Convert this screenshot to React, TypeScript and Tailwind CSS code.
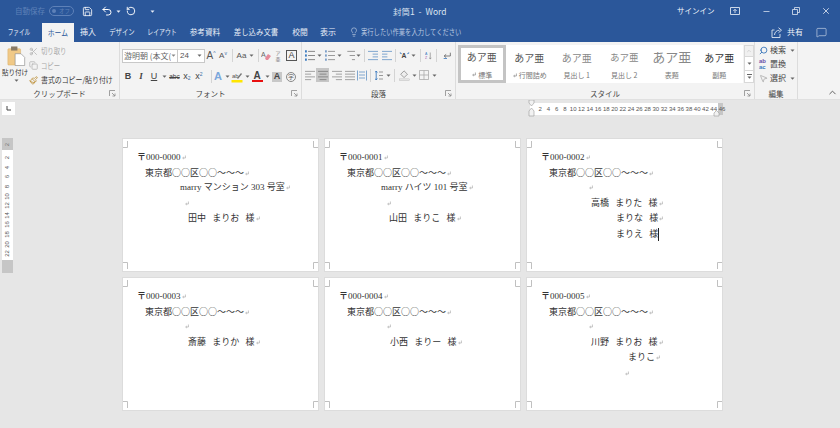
import React from "react";
import { Save, Undo2, RotateCcw, Scissors, Copy, Paintbrush, Lightbulb, MessageSquare, ChevronUp, Search, MousePointer2, X, Minus } from "lucide-react";

const JP = { fontFamily: '"Noto Sans CJK JP", "Noto Sans", sans-serif' };
const MIN = { fontFamily: '"Liberation Serif", "Noto Sans CJK JP", serif' };

const Caret = ({ c = "#666" }: { c?: string }) => (
  <svg width="5" height="3" viewBox="0 0 5 3" className="shrink-0"><path d="M0.5 0.5h4L2.5 2.8z" fill={c} /></svg>
);
const Drop = ({ w = 9 }: { w?: number }) => (
  <span className="flex items-center justify-center shrink-0" style={{ width: w }}><Caret /></span>
);
const Cell = ({ w, children, cls = "" }: { w: number; children?: React.ReactNode; cls?: string }) => (
  <span className={`flex items-center justify-center shrink-0 h-full ${cls}`} style={{ width: w }}>{children}</span>
);
const Sp = ({ w }: { w: number }) => <span className="shrink-0" style={{ width: w }} />;
const SepC = ({ w }: { w: number }) => (
  <span className="flex justify-end items-center shrink-0 pr-px" style={{ width: w }}><span className="w-px h-[13px] bg-[#d4d4d4]" /></span>
);
const Launcher = () => (
  <svg width="7" height="7" viewBox="0 0 7 7" className="shrink-0"><path d="M0.5 6V0.5H6M3 3l3 3M6 3.5V6H3.5" fill="none" stroke="#8a8a8a" strokeWidth="0.8" /></svg>
);
const Mark = ({ c = "#a0a0a0" }: { c?: string }) => (
  <svg width="4" height="5" viewBox="0 0 4 5" className="inline-block align-baseline ml-px"><path d="M3.4 0.5V3H0.8M1.8 2L0.7 3l1.1 1" fill="none" stroke={c} strokeWidth="0.6" /></svg>
);

const Lines = ({ rows, c = "#a2a2a2", bullet, w = 10 }: { rows: [number, number][]; c?: string; bullet?: string; w?: number }) => (
  <svg width={w} height="11" viewBox="0 0 13 12" preserveAspectRatio="none">
    {rows.map(([a, b], i) => {
      const y = 1.5 + (i * 9) / Math.max(rows.length - 1, 1);
      return <path key={i} d={`M${a} ${y}H${b}`} stroke={c} strokeWidth="1.1" />;
    })}
    {bullet && rows.map((_, i) => {
      const y = 1.5 + (i * 9) / Math.max(rows.length - 1, 1);
      return <rect key={i} x="0" y={y - 1.2} width="2.4" height="2.4" fill={bullet} />;
    })}
  </svg>
);

const tabs: [string, number, number][] = [
  ["ファイル", 8, 22], ["挿入", 80, 16], ["デザイン", 109, 25], ["レイアウト", 147, 29], ["参考資料", 190, 30],
  ["差し込み文書", 234, 44], ["校閲", 292, 15], ["表示", 320, 16],
];

const TabLabel = ({ w, children }: { w: number; children: React.ReactNode }) => (
  <span className="flex justify-center shrink-0 text-[8px] text-[#e8eef7] whitespace-nowrap" style={{ width: w }}>
    <span className="inline-block origin-center" style={{ transform: `scaleX(${Math.min(1, (w + 0.5) / (String(children).length * 8))})` }}>{children}</span>
  </span>
);

function TitleBar() {
  return (
    <div className="h-[22px] flex items-center bg-[#2b579a] text-[#dfe6f2]" style={JP}>
      <span className="ml-[15px] w-[30px] text-[7.5px] text-[#5e81b8] whitespace-nowrap">自動保存</span>
      <span className="ml-[4px] w-[25px] h-[10px] rounded-full border border-[#5e81b8] flex items-center gap-[3px] pl-[2px] text-[5.5px] text-[#5e81b8]">
        <span className="w-[4px] h-[4px] rounded-full bg-[#5e81b8]" />オフ
      </span>
      <Save size={11} strokeWidth={1.8} color="#fff" className="ml-[8px]" />
      <Undo2 size={12} strokeWidth={2} color="#fff" className="ml-[8px]" />
      <span className="ml-[3px]"><Caret c="#e8eef7" /></span>
      <RotateCcw size={10} strokeWidth={2.2} color="#fff" className="ml-[5px]" />
      <span className="ml-[14px]"><Caret c="#e8eef7" /></span>
      <span className="ml-[238px] w-[56px] text-[8.5px] text-[#dbe3f0] whitespace-nowrap [word-spacing:2px]">封筒1 - Word</span>
      <span className="ml-[228px] w-[32px] text-[7.5px] text-[#f2f5fa] whitespace-nowrap">サインイン</span>
      <svg width="10" height="8" viewBox="0 0 10 8" className="ml-[21px]"><path d="M.5.5h9v7h-9zM5 6V2.5M3.3 4L5 2.3 6.7 4" fill="none" stroke="#dfe6f2" strokeWidth="0.9" /></svg>
      <Minus size={9} color="#dfe6f2" className="ml-[22px]" />
      <svg width="8" height="8" viewBox="0 0 8 8" className="ml-[21px]"><path d="M.5 2.5h5v5h-5zM2.5 2.5v-2h5v5h-2" fill="none" stroke="#dfe6f2" strokeWidth="0.8" /></svg>
      <X size={10} color="#dfe6f2" className="ml-[21px]" />
    </div>
  );
}

function TabBar() {
  let x = 0;
  return (
    <div className="h-[20px] flex items-stretch bg-[#2b579a]" style={JP}>
      {tabs.slice(0, 1).map(([t, l, w]) => {
        const el = <span key={t} className="flex items-center" style={{ marginLeft: l - x }}><TabLabel w={w}>{t}</TabLabel></span>;
        x = l + w;
        return el;
      })}
      <span className="ml-[12px] w-[32px] mt-[1px] bg-[#f3f3f3] text-[#2b579a] text-[8px] flex items-center justify-center whitespace-nowrap"><span className="inline-block scale-x-[0.85]">ホーム</span></span>
      {(() => { x = 74; return null; })()}
      {tabs.slice(1).map(([t, l, w]) => {
        const el = <span key={t} className="flex items-center" style={{ marginLeft: l - x }}><TabLabel w={w}>{t}</TabLabel></span>;
        x = l + w;
        return el;
      })}
      <span className="flex items-center ml-[13px] text-[7.5px] text-[#b9c8e0] whitespace-nowrap">
        <Lightbulb size={10} strokeWidth={1.3} color="#dfe6f2" />
        <span className="ml-[2px] w-[106px]"><span className="inline-block origin-left scale-x-[0.84]">実行したい作業を入力してください</span></span>
      </span>
      <span className="flex items-center ml-[304px] text-[8px] text-[#eef2f8] whitespace-nowrap">
        <svg width="12" height="11" viewBox="0 0 12 11"><path d="M3.5 3H1v7.5h8V7M3.5 8C3.5 5 6 3.2 8.5 3.2M7.5.7l3 2.5-3 2.5" fill="none" stroke="#dfe6f2" strokeWidth="0.9" /></svg>
        <span className="ml-[4px]">共有</span>
        <MessageSquare size={11} strokeWidth={1.3} color="#dfe6f2" className="ml-[13px]" />
      </span>
    </div>
  );
}

const Group = ({ w, label, children, launcher = true, sepl = true }: { w: number; label: string; children: React.ReactNode; launcher?: boolean; sepl?: boolean }) => (
  <div className={`flex flex-col shrink-0 h-full ${sepl ? "border-r border-[#dcdcdc]" : ""}`} style={{ width: w }}>
    <div className="flex-1 min-h-0">{children}</div>
    <div className="h-[11px] flex items-center relative justify-center text-[7.5px] text-[#444] whitespace-nowrap">
      {label}
      {launcher && <span className="absolute right-[3px] top-[2px]"><Launcher /></span>}
    </div>
  </div>
);

function Clipboard() {
  return (
    <Group w={120} label="クリップボード">
      <div className="flex h-full">
        <div className="w-[33px] flex flex-col items-center pt-[4px]">
          <svg width="19" height="20" viewBox="0 0 20 22" className="ml-[3px]"><rect x="0.5" y="3" width="14" height="18" rx="1" fill="#f0c987" stroke="#d8a85e" strokeWidth="0.5" /><rect x="4" y="0.5" width="7" height="4.5" fill="#8a7b66" /><path d="M8.5 8.5h6.5l4 4v9H8.5z" fill="#fff" stroke="#8c8c8c" strokeWidth="0.7" /></svg>
          <span className="text-[7px] leading-[9px] text-[#333] whitespace-nowrap mt-[2px] scale-x-[0.93]">貼り付け</span>
          <span className="mt-[2px] ml-[3px]"><Caret /></span>
        </div>
        <div className="pt-[2px] flex flex-col text-[7.5px] whitespace-nowrap">
          <span className="h-[14px] flex items-center text-[#a8a8a8]"><Scissors size={9} color="#b0b0b0" className="mr-[3px]" /><span className="inline-block origin-left scale-x-[0.85]">切り取り</span></span>
          <span className="h-[15px] flex items-center text-[#a8a8a8]"><Copy size={9} color="#b0b0b0" className="mr-[3px]" /><span className="inline-block origin-left scale-x-[0.85]">コピー</span></span>
          <span className="h-[14px] flex items-center text-[#333]"><Paintbrush size={9} color="#b98a2e" className="mr-[3px]" /><span className="inline-block origin-left scale-x-[0.92]">書式のコピー/貼り付け</span></span>
        </div>
      </div>
    </Group>
  );
}

function FontGroup() {
  return (
    <Group w={182} label="フォント">
      <div className="flex flex-col pt-[6px] pl-[2px] text-[#444]">
        <div className="flex items-center h-[15px]">
          <span className="w-[56px] h-[14px] bg-white border border-[#c8c8c8] text-[8px] text-[#666] pl-[1px] pr-[1px] flex items-center justify-between whitespace-nowrap overflow-hidden">
            <span className="w-[49px] overflow-hidden">游明朝 (本文(</span><Caret c="#888" />
          </span>
          <span className="w-[27px] h-[14px] bg-white border border-[#c8c8c8] border-l-0 text-[8px] text-[#555] pl-[2px] flex items-center justify-between pr-[2px]" style={{ fontFamily: '"Liberation Sans"' }}>24<Caret /></span>
          <Cell w={12} cls="text-[10px] font-['Liberation_Sans'] text-[#555]">A<sup className="text-[#3a6ea5] text-[5px]">^</sup></Cell>
          <Cell w={12} cls="text-[8px] font-['Liberation_Sans'] text-[#555]">A<sup className="text-[#3a6ea5] text-[5px]">v</sup></Cell>
          <SepC w={5} />
          <Cell w={15} cls="text-[8px] font-['Liberation_Sans'] text-[#555]">Aa</Cell>
          <Cell w={5}><Caret /></Cell>
          <SepC w={6} />
          <Cell w={12}>
            <svg width="11" height="11" viewBox="0 0 11 11"><text x="0" y="7" fontSize="7" fill="#666" fontFamily="Liberation Sans">A</text><path d="M4 8l3-4 3 2-3 4H5z" fill="#e58a9a" /></svg>
          </Cell>
          <Cell w={12}><span className="flex flex-col items-center text-[5px] leading-[5.5px] text-[#777]"><span>ア</span><span>亜</span></span></Cell>
          <Sp w={2} />
          <span className="w-[11px] h-[11px] border border-[#555] flex items-center justify-center text-[9px] font-['Liberation_Sans'] text-[#444]">A</span>
        </div>
        <div className="flex items-center h-[15px] mt-[6px] font-['Liberation_Sans'] text-[#444]">
          <Cell w={12} cls="font-bold text-[9px]">B</Cell>
          <Cell w={14} cls="italic text-[9px] font-['Liberation_Serif'] font-bold">I</Cell>
          <Cell w={12} cls="underline text-[9px]">U</Cell>
          <Drop w={8} />
          <Cell w={13} cls="text-[6.5px] line-through">abc</Cell>
          <Cell w={12} cls="text-[9px]">x<sub className="text-[5px] text-[#3a6ea5]">2</sub></Cell>
          <Cell w={12} cls="text-[9px]">x<sup className="text-[5px] text-[#3a6ea5]">2</sup></Cell>
          <SepC w={8} />
          <Cell w={10} cls="text-[11px] text-[#7ba7dc] font-bold">A</Cell>
          <Drop w={8} />
          <Cell w={12}><svg width="12" height="12" viewBox="0 0 12 12"><text x="1" y="7" fontSize="6" fill="#555" fontFamily="Liberation Sans">ab</text><path d="M6 7l4-5 1 1-4 5z" fill="#777" /><rect x="0.5" y="9" width="11" height="2.5" fill="#ffe600" /></svg></Cell>
          <Drop w={8} />
          <Cell w={12}><span className="flex flex-col items-center leading-[9px] text-[10px] font-bold text-[#444]">A<span className="w-[11px] h-[2.5px] bg-[#e81010]" /></span></Cell>
          <Drop w={8} />
          <Cell w={12}><span className="w-[10px] h-[10px] bg-[#c8c8c8] flex items-center justify-center text-[9px] font-bold text-[#444]">A</span></Cell>
          <Sp w={2} />
          <Cell w={12}><span className="w-[10px] h-[10px] rounded-full border border-[#888] flex items-center justify-center text-[6px] text-[#666]" style={JP}>字</span></Cell>
        </div>
      </div>
    </Group>
  );
}

const B = "#3d7cc0";
function ParaGroup() {
  return (
    <Group w={154} label="段落">
      <div className="flex flex-col pt-[6px] pl-[3px]">
        <div className="flex items-center h-[15px]">
          <Cell w={10}><Lines rows={[[4, 13], [4, 13], [4, 13]]} bullet={B} c="#888" /></Cell><Drop w={8} />
          <Sp w={2} />
          <Cell w={10}><Lines rows={[[4, 13], [4, 13], [4, 13]]} bullet="#7d9fc8" c="#999" /></Cell><Drop w={8} />
          <Sp w={2} />
          <Cell w={10}><Lines rows={[[3, 13], [6, 13], [9, 13]]} c="#999" /></Cell><Drop w={6} />
          <SepC w={5} />
          <Sp w={2} />
          <Cell w={10}><Lines rows={[[0, 13], [6, 13], [6, 13], [0, 13]]} c="#7fa6cf" /></Cell>
          <Sp w={4} />
          <Cell w={10}><Lines rows={[[0, 13], [0, 7], [0, 7], [0, 13]]} c="#7fa6cf" /></Cell>
          <SepC w={5} />
          <Sp w={2} />
          <Cell w={11}><svg width="12" height="11" viewBox="0 0 13 11"><text x="3" y="9" fontSize="8" fontWeight="700" fill="#444" fontFamily="Liberation Sans">A</text><path d="M1 2l2 1.5M12 2l-2 1.5" stroke="#3d7cc0" strokeWidth="1.2" /></svg></Cell><Drop w={7} />
          <SepC w={5} />
          <Sp w={3} />
          <Cell w={7}><svg width="10" height="14" viewBox="0 0 12 14"><text x="0" y="6" fontSize="6" fill="#3d7cc0" fontFamily="Liberation Sans">A</text><text x="0" y="13" fontSize="6" fill="#9c4fa8" fontFamily="Liberation Sans">Z</text><path d="M9 1v11M7 10l2 2 2-2" fill="none" stroke="#666" strokeWidth="0.9" /></svg></Cell>
          <SepC w={6} />
          <Sp w={4} />
          <Cell w={10}><svg width="11" height="10" viewBox="0 0 12 10"><path d="M10 1v4H3M5 3L2.5 5 5 7" fill="none" stroke="#666" strokeWidth="1" /><path d="M2 8h4" stroke="#3d7cc0" /></svg></Cell>
        </div>
        <div className="flex items-center h-[14px] mt-[5px]">
          <Cell w={10}><Lines rows={[[0, 13], [0, 8], [0, 13], [0, 8]]} /></Cell>
          <Sp w={1} />
          <Cell w={13} cls="bg-[#c6c6c6]"><Lines rows={[[0, 13], [2, 11], [0, 13], [2, 11]]} c="#8a8a8a" /></Cell>
          <Sp w={3} />
          <Cell w={10}><Lines rows={[[0, 13], [5, 13], [0, 13], [5, 13]]} /></Cell>
          <Sp w={3} />
          <Cell w={10}><Lines rows={[[0, 13], [0, 13], [0, 13], [0, 13]]} /></Cell>
          <Sp w={2} />
          <Cell w={10}><svg width="10" height="11" viewBox="0 0 10 11"><path d="M.5.5v10M9.5.5v10M2 2h6M2 5h6M2 8h6" fill="none" stroke="#7fa6cf" strokeWidth="1" /></svg></Cell>
          <SepC w={5} />
          <Sp w={3} />
          <Cell w={8}><svg width="8" height="11" viewBox="0 0 8 11"><path d="M1.2 1v9M0 2.5L1.2 1l1.2 1.5M0 8.5L1.2 10l1.2-1.5" fill="none" stroke="#3d7cc0" strokeWidth="0.9" /><path d="M4 2h4M4 5.5h4M4 9h4" stroke="#999" /></svg></Cell><Drop w={10} />
          <SepC w={3} />
          <Sp w={3} />
          <Cell w={11}><svg width="12" height="13" viewBox="0 0 13 13"><path d="M6 1l4 4-4 4-4-4z" fill="#eee" stroke="#777" strokeWidth="0.8" /><rect x="0.5" y="10.5" width="12" height="2" fill="#e6e6e6" stroke="#aaa" strokeWidth="0.4" /></svg></Cell><Drop w={8} />
          <Sp w={1} />
          <Cell w={10}><svg width="10" height="10" viewBox="0 0 11 11"><path d="M.5.5h10v10H.5zM5.5.5v10M.5 5.5h10" fill="none" stroke="#aaa" strokeWidth="0.9" /></svg></Cell><Drop w={10} />
        </div>
      </div>
    </Group>
  );
}

const styles: { big: string; small: string; cls: string; mark?: boolean; on?: boolean }[] = [
  { big: "あア亜", small: "標準", cls: "text-[10px] text-[#555]", mark: true, on: true },
  { big: "あア亜", small: "行間詰め", cls: "text-[10px] text-[#555]", mark: true },
  { big: "あア亜", small: "見出し 1", cls: "text-[10px] text-[#888]" },
  { big: "あア亜", small: "見出し 2", cls: "text-[9.5px] text-[#888]" },
  { big: "あア亜", small: "表題", cls: "text-[13px] text-[#888]" },
  { big: "あア亜", small: "副題", cls: "text-[10px] text-[#333]" },
];

function StyleGroup() {
  return (
    <Group w={299} label="スタイル">
      <div className="flex pt-[3px] pl-[2px] h-[41px]">
        <div className="flex w-[285px] h-[38px] bg-white">
          {styles.map((s) => (
            <div key={s.small} className={`w-[47.5px] shrink-0 flex flex-col items-center ${s.on ? "border-[3px] border-[#c4c4c4]" : "pt-[3px]"}`} style={MIN}>
              <span className={`h-[20px] flex items-center whitespace-nowrap ${s.cls}`}>{s.big}</span>
              <span className="mt-[2px] text-[7px] text-[#777] whitespace-nowrap flex items-center" style={JP}>{s.mark && <span className="mr-[2px] flex"><Mark c="#777" /></span>}{s.small}</span>
            </div>
          ))}
        </div>
        <div className="w-[10px] h-[38px] flex flex-col ml-px">
          <span className="h-[12px] bg-[#f0f0f0] border border-[#d8d8d8] flex items-center justify-center"><ChevronUp size={6} color="#bbb" /></span>
          <span className="h-[13px] bg-white border-x border-[#d8d8d8] flex items-center justify-center"><Caret /></span>
          <span className="h-[13px] bg-white border border-[#d8d8d8] flex flex-col items-center justify-center gap-px"><span className="w-[5px] h-px bg-[#666]" /><Caret /></span>
        </div>
      </div>
    </Group>
  );
}

function EditGroup() {
  return (
    <Group w={43} label="編集" launcher={false}>
      <div className="flex flex-col pt-[1px] pl-[4px] text-[8px] text-[#444] whitespace-nowrap">
        <span className="h-[14px] flex items-center"><Search size={9} color="#2b6cb5" strokeWidth={2.2} className="mr-[2px] -scale-x-100" />検索<span className="ml-[4px]"><Caret /></span></span>
        <span className="h-[14px] flex items-center"><span className="w-[10px] mr-[1px] leading-[6px] text-[6px] font-bold text-[#6a4fa8]" style={{ fontFamily: "Liberation Sans" }}>ab<br /><span className="text-[#3d7cc0]">ac</span></span>置換</span>
        <span className="h-[14px] flex items-center"><MousePointer2 size={9} color="#777" strokeWidth={1.2} className="mr-[2px]" />選択<span className="ml-[4px]"><Caret /></span></span>
      </div>
    </Group>
  );
}

function Ribbon() {
  return (
    <div className="h-[58px] flex bg-[#f3f3f3] border-b border-[#e0e0e0] text-[#444]" style={JP}>
      <Clipboard />
      <FontGroup />
      <ParaGroup />
      <StyleGroup />
      <EditGroup />
      <div className="flex-1 flex items-end justify-end pb-[1px] pr-[2px]"><ChevronUp size={11} color="#555" /></div>
    </div>
  );
}

const nums = Array.from({ length: 23 }, (_, i) => (i + 1) * 2);

function HRuler() {
  return (
    <div className="h-[16px] flex items-start pt-[2px] pl-[2px]">
      <span className="w-[13px] h-[13px] bg-white flex items-center justify-center">
        <svg width="5" height="5" viewBox="0 0 5 5"><path d="M1 0v4h4" fill="none" stroke="#444" strokeWidth="1" /></svg>
      </span>
      <div className="ml-[515px] w-[190px] h-[12px] mt-px bg-white flex items-center pl-[6px] relative font-['Liberation_Sans'] text-[6px] text-[#555]">
        <span className="absolute left-[-2px] top-[-3px]"><svg width="7" height="17" viewBox="0 0 7 17"><path d="M1 0h5v3L3.5 6 1 3zM1 11l2.5-3L6 11v5H1z" fill="#f2f2f2" stroke="#999" strokeWidth="0.6" /></svg></span>
        <span className="absolute right-[-3px] top-0 w-[5px] h-[12px] bg-[#c6c6c6]" />
        {nums.map((n) => <span key={n} className="relative w-[8.27px] shrink-0 text-center">{n}</span>)}
        <span className="absolute right-[0px] top-[7px]"><svg width="7" height="7" viewBox="0 0 7 7"><path d="M1 6V3l2.5-2.5L6 3v3z" fill="#f2f2f2" stroke="#999" strokeWidth="0.6" /></svg></span>
      </div>
    </div>
  );
}

type L = { x: number; t?: string; mark?: boolean; cursor?: boolean; wide?: boolean };
type C = { code: string; extra?: L[] };
const addr = "東京都○○区○○～～～";

const cards: C[] = [
  { code: "000-0000", extra: [{ x: 57, t: "marry マンション 303 号室", mark: true }, { x: 61 }, { x: 65, t: "田中 まりお 様", mark: true, wide: true }] },
  { code: "000-0001", extra: [{ x: 56, t: "marry ハイツ 101 号室", mark: true }, { x: 61 }, { x: 64, t: "山田 まりこ 様", mark: true, wide: true }] },
  { code: "000-0002", extra: [{ x: 61 }, { x: 64, t: "高橋 まりた 様", mark: true, wide: true }, { x: 89, t: "まりな 様", mark: true, wide: true }, { x: 89, t: "まりえ 様", cursor: true, wide: true }] },
  { code: "000-0003", extra: [{ x: 61 }, { x: 65, t: "斎藤 まりか 様", mark: true, wide: true }] },
  { code: "000-0004", extra: [{ x: 61 }, { x: 65, t: "小西 まりー 様", mark: true, wide: true }] },
  { code: "000-0005", extra: [{ x: 61 }, { x: 64, t: "川野 まりお 様", mark: true, wide: true }, { x: 101, t: "まりこ", mark: true }, { x: 97 }] },
];

const Crop = ({ cls, d }: { cls: string; d: string }) => (
  <svg width="5" height="7" viewBox="0 0 5 7" className={`absolute ${cls}`}><path d={d} fill="none" stroke="#c0c0c0" strokeWidth="1" /></svg>
);

function Line({ x, t, mark, cursor, wide }: L) {
  return (
    <div className={`h-[15.5px] leading-[15.5px] text-[9px] text-[#333] whitespace-nowrap ${wide ? "[word-spacing:4px]" : ""}`} style={{ paddingLeft: x }}>
      {t && <span>{t}</span>}
      {cursor && <span className="inline-block w-px h-[13px] bg-[#222] align-middle" />}
      {(mark || !t) && <Mark />}
    </div>
  );
}

function Card({ code, extra }: C) {
  return (
    <div className="relative h-[134px] bg-white border border-[#dcdcdc] pt-[10px]" style={MIN}>
      <Crop cls="left-0 top-[2px]" d="M0 6.5H4.5V0" />
      <Crop cls="right-0 top-[2px]" d="M5 6.5H.5V0" />
      <Crop cls="left-0 bottom-[2px]" d="M0 .5H4.5V7" />
      <Crop cls="right-0 bottom-[2px]" d="M5 .5H.5V7" />
      <div className="h-[15.5px] leading-[15.5px] text-[9px] text-[#333] whitespace-nowrap pl-[14px]">
        <span className="font-bold" style={JP}>〒</span>{code}<Mark />
      </div>
      <div className="h-[15.5px] leading-[15.5px] text-[9px] text-[#333] whitespace-nowrap pl-[22px]" style={JP}>{addr}<Mark /></div>
      {extra?.map((l, i) => <Line key={i} {...l} />)}
    </div>
  );
}

function VRuler() {
  return (
    <div className="w-[11px] h-[135px] ml-[2px] flex flex-col bg-white shrink-0 font-['Liberation_Sans'] text-[6px] text-[#555]">
      <div className="h-[12px] bg-[#c6c6c6] flex items-center justify-center"><span className="-rotate-90 text-[#777]">2</span></div>
      <div className="flex-1 flex flex-col pt-[3px]">
        {[2, 4, 6, 8, 10, 12, 14, 16, 18, 20, 22].map((n) => (
          <span key={n} className="h-[9.6px] flex items-center justify-center"><span className="-rotate-90">{n}</span></span>
        ))}
      </div>
      <div className="h-[13px] bg-[#c6c6c6]" />
    </div>
  );
}

export default function App() {
  return (
    <div className="w-[840px] h-[428px] overflow-hidden bg-[#e6e6e6]">
      <TitleBar />
      <TabBar />
      <Ribbon />
      <HRuler />
      <div className="flex items-start pt-[22px]">
        <VRuler />
        <div className="ml-[109px] grid grid-cols-[197px_197px_197px] gap-x-[5px] gap-y-[5px]">
          {cards.map((c) => <Card key={c.code} {...c} />)}
        </div>
      </div>
    </div>
  );
}
